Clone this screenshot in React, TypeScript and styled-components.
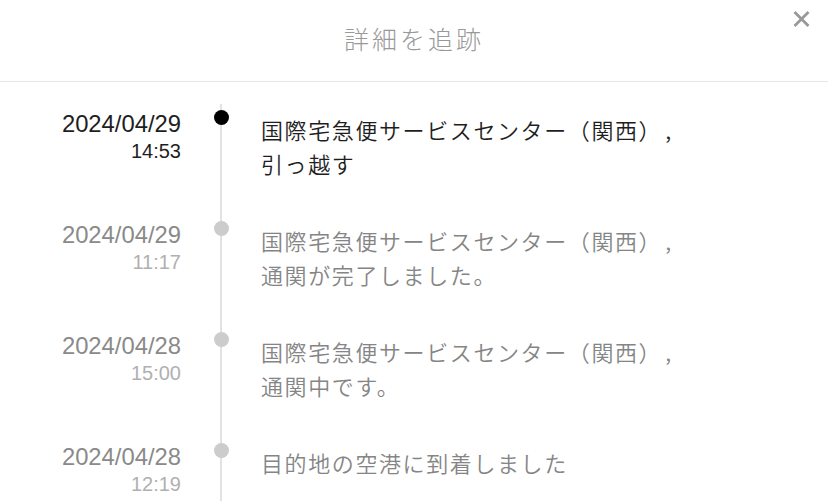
import * as React from "react";
import styled, { createGlobalStyle } from "styled-components";

const GlobalStyle = createGlobalStyle`
  html, body {
    margin: 0;
    padding: 0;
    background: #ffffff;
  }
  body {
    font-family: "Liberation Sans", "Noto Sans CJK JP", sans-serif;
  }
`;

const Sheet = styled.div`
  width: 828px;
  height: 501px;
  overflow: hidden;
  background: #ffffff;
`;

const Header = styled.header`
  position: relative;
  height: 82px;
  border-bottom: 1px solid #e6e6e6;
  display: flex;
  align-items: center;
  justify-content: center;
  padding-bottom: 6px;
  box-sizing: border-box;
`;

const Title = styled.h1`
  margin: 0;
  font-family: "Noto Sans CJK JP", sans-serif;
  font-size: 25px;
  font-weight: 300;
  letter-spacing: 3px;
  color: #999999;
`;

const CloseButton = styled.button`
  position: absolute;
  top: 10px;
  right: 18px;
  width: 18px;
  height: 18px;
  padding: 0;
  border: none;
  background: none;
  display: flex;
  align-items: center;
  justify-content: center;
  cursor: pointer;
`;

const Timeline = styled.ol`
  list-style: none;
  margin: 0;
  padding: 22px 0 0;
`;

const Row = styled.li`
  display: grid;
  grid-template-columns: 181px 80px 1fr;
  min-height: 111px;
`;

const When = styled.div<{ $active: boolean }>`
  padding-top: 6px;
  text-align: right;
  color: ${(p) => (p.$active ? "#1e1e1e" : "#8a8a8a")};
`;

const Day = styled.div`
  font-size: 23.8px;
  line-height: 28px;
`;

const Time = styled.div<{ $active: boolean }>`
  font-size: 20px;
  line-height: 26px;
  color: ${(p) => (p.$active ? "#1e1e1e" : "#b0b0b0")};
`;

const Track = styled.div`
  position: relative;
  display: flex;
  justify-content: center;

  &::before {
    content: "";
    position: absolute;
    top: 0;
    bottom: 0;
    left: 39px;
    width: 2px;
    background: #e2e2e2;
  }
`;

const Dot = styled.span<{ $active: boolean }>`
  position: relative;
  margin-top: 6px;
  width: 15px;
  height: 15px;
  border-radius: 50%;
  background: ${(p) => (p.$active ? "#000000" : "#cccccc")};
`;

const Message = styled.div<{ $active: boolean }>`
  padding-top: 8px;
  font-family: "Noto Sans CJK JP", sans-serif;
  font-size: 22px;
  font-weight: 350;
  line-height: 34px;
  letter-spacing: 1.6px;
  color: ${(p) => (p.$active ? "#1e1e1e" : "#858585")};
`;

const Comma = styled.span`
  margin-left: 3px;
`;

type Event = {
  day: string;
  time: string;
  place?: string;
  note: string;
};

const events: Event[] = [
  {
    day: "2024/04/29",
    time: "14:53",
    place: "国際宅急便サービスセンター（関西）",
    note: "引っ越す",
  },
  {
    day: "2024/04/29",
    time: "11:17",
    place: "国際宅急便サービスセンター（関西）",
    note: "通関が完了しました。",
  },
  {
    day: "2024/04/28",
    time: "15:00",
    place: "国際宅急便サービスセンター（関西）",
    note: "通関中です。",
  },
  {
    day: "2024/04/28",
    time: "12:19",
    note: "目的地の空港に到着しました",
  },
];

const CloseIcon = () => (
  <svg width="17" height="16" viewBox="0 0 17 16" fill="none">
    <path
      d="M1.5 1 L15.5 15 M15.5 1 L1.5 15"
      stroke="#999999"
      strokeWidth="2.8"
    />
  </svg>
);

const App = () => {
  return (
    <Sheet>
      <GlobalStyle />
      <Header>
        <Title>詳細を追跡</Title>
        <CloseButton aria-label="閉じる">
          <CloseIcon />
        </CloseButton>
      </Header>
      <Timeline>
        {events.map((e, i) => {
          const active = i === 0;
          return (
            <Row key={i}>
              <When $active={active}>
                <Day>{e.day}</Day>
                <Time $active={active}>{e.time}</Time>
              </When>
              <Track>
                <Dot $active={active} />
              </Track>
              <Message $active={active}>
                {e.place && (
                  <div>
                    {e.place}
                    <Comma>,</Comma>
                  </div>
                )}
                <div>{e.note}</div>
              </Message>
            </Row>
          );
        })}
      </Timeline>
    </Sheet>
  );
};

export default App;
